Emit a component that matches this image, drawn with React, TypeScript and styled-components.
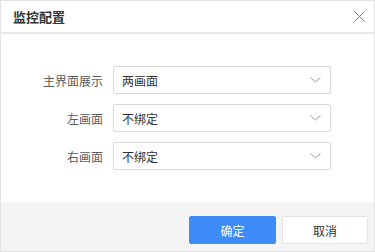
import React from "react";
import styled, { createGlobalStyle } from "styled-components";

const Global = createGlobalStyle`
  html, body { margin: 0; padding: 0; background: #fff; }
  body { font-family: "Noto Sans CJK SC", "Noto Sans", sans-serif; }
  * { box-sizing: border-box; }
`;

const Dialog = styled.div`
  width: 375px;
  height: 252px;
  border: 1px solid #e3e3e3;
  background: #fff;
  display: flex;
  flex-direction: column;
`;

const Header = styled.div`
  height: 33px;
  flex: none;
  display: flex;
  align-items: center;
  justify-content: space-between;
  padding: 0 7px 0 12px;
  border-bottom: 2px solid #e8e8e8;
`;

const Title = styled.div`
  font-size: 13px;
  font-weight: 700;
  color: #333;
  line-height: 1;
`;

const Close = styled.button`
  width: 16px;
  height: 16px;
  padding: 0;
  border: none;
  background: transparent;
  display: flex;
  align-items: center;
  justify-content: center;
  cursor: pointer;
`;

const Body = styled.div`
  flex: 1;
  padding-top: 32px;
  display: flex;
  flex-direction: column;
  gap: 10px;
`;

const Row = styled.div`
  display: flex;
  align-items: center;
  height: 28px;
`;

const Label = styled.div`
  width: 102px;
  margin-right: 10px;
  text-align: right;
  font-size: 12px;
  color: #5c5c5c;
`;

const Select = styled.div`
  width: 218px;
  height: 28px;
  border: 1px solid #d9d9d9;
  border-radius: 2px;
  display: flex;
  align-items: center;
  justify-content: space-between;
  padding: 0 9px 0 8px;
  font-size: 12px;
  color: #333;
`;

const Footer = styled.div`
  height: 49px;
  flex: none;
  background: #f4f4f4;
  display: flex;
  justify-content: flex-end;
  align-items: flex-start;
  gap: 6px;
  padding: 14px 6px 0 0;
`;

const Button = styled.button<{ $primary?: boolean }>`
  width: ${(p) => (p.$primary ? 87 : 86)}px;
  height: 28px;
  border-radius: 2px;
  border: 1px solid ${(p) => (p.$primary ? "#3d8cf8" : "#e2e2e2")};
  background: ${(p) => (p.$primary ? "#3d8cf8" : "#fff")};
  color: ${(p) => (p.$primary ? "#fff" : "#333")};
  font-family: "Noto Sans CJK SC", sans-serif;
  font-size: 12px;
  padding: 0;
`;

const Chevron = () => (
  <svg width="11" height="6" viewBox="0 0 11 6" fill="none">
    <path d="M0.5 0.5 L5.5 5 L10.5 0.5" stroke="#9a9a9a" strokeWidth="1" />
  </svg>
);

const rows = [
  { label: "主界面展示", value: "两画面" },
  { label: "左画面", value: "不绑定" },
  { label: "右画面", value: "不绑定" },
];

export default function App() {
  return (
    <>
      <Global />
      <Dialog>
        <Header>
          <Title>监控配置</Title>
          <Close aria-label="close">
            <svg width="11" height="11" viewBox="0 0 11 11">
              <path d="M0.5 0.5 L10.5 10.5 M10.5 0.5 L0.5 10.5" stroke="#777" strokeWidth="1" />
            </svg>
          </Close>
        </Header>
        <Body>
          {rows.map((r) => (
            <Row key={r.label}>
              <Label>{r.label}</Label>
              <Select>
                <span>{r.value}</span>
                <Chevron />
              </Select>
            </Row>
          ))}
        </Body>
        <Footer>
          <Button $primary>确定</Button>
          <Button>取消</Button>
        </Footer>
      </Dialog>
    </>
  );
}
